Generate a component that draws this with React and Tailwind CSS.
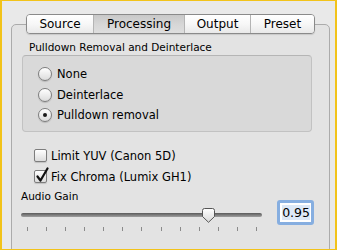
import React from 'react'

const tabs = [
  { label: 'Source', w: 'w-[66px]' },
  { label: 'Processing', w: 'w-[91px]', active: true },
  { label: 'Output', w: 'w-[66px]' },
  { label: 'Preset', w: 'w-[64px]' },
]

function Radio({ checked, label }) {
  return (
    <div className="flex items-center h-[20.5px] gap-[5px]">
      <span className="relative flex items-center justify-center size-[14px] rounded-full border border-[#7d7d7d] bg-gradient-to-b from-[#ffffff] to-[#dcdcdc] shadow-[0_1px_1px_rgba(0,0,0,0.15)]">
        {checked && <span className="size-[4px] rounded-full bg-[#1a1a1a]" />}
      </span>
      <span className="text-[11.5px] leading-[14px] text-black">{label}</span>
    </div>
  )
}

function Checkbox({ checked, label }) {
  return (
    <div className="flex items-center h-[21px] gap-[4px]">
      <span className="relative size-[13px] rounded-[2px] border border-[#7d7d7d] bg-gradient-to-b from-[#ffffff] to-[#dcdcdc] shadow-[0_1px_1px_rgba(0,0,0,0.15)]">
        {checked && (
          <svg viewBox="0 0 14 16" className="absolute left-[0px] top-[-4px] w-[14px] h-[16px]">
            <path d="M2.5 9.5 L5.5 13.5 L12.5 1.5" fill="none" stroke="#111" strokeWidth="2.2" strokeLinecap="round" strokeLinejoin="round" />
          </svg>
        )}
      </span>
      <span className="text-[11.5px] leading-[14px] text-black">{label}</span>
    </div>
  )
}

export default function App() {
  const ticks = Array.from({ length: 13 })
  return (
    <div
      className="w-[337px] h-[250px] overflow-hidden bg-[#e9e9e9] border-[#f2c31a] border-t border-b border-l-2 border-r-2"
      style={{ fontFamily: '"DejaVu Sans", Verdana, sans-serif' }}
    >
      {/* Tabs */}
      <div className="relative z-10 mt-[13px] pl-[24px] flex">
        <div className="flex h-[20px] rounded-[4px] border border-[#8a8a8a] overflow-hidden shadow-[0_1px_1px_rgba(0,0,0,0.12)]">
          {tabs.map((t, i) => (
            <div
              key={t.label}
              className={`${t.w} flex items-center justify-center text-[12px] text-black ${i > 0 ? 'border-l border-[#b4b4b4]' : ''} ${
                t.active
                  ? 'bg-gradient-to-b from-[#c8c8c8] via-[#d6d6d6] to-[#dedede]'
                  : 'bg-gradient-to-b from-[#ffffff] via-[#f7f7f7] to-[#e9e9e9]'
              }`}
            >
              {t.label}
            </div>
          ))}
        </div>
      </div>

      {/* Tab box */}
      <div className="ml-[9px] w-[319px] h-[300px] -mt-[10px] border border-[#ababab] rounded-[5px] bg-[#e3e3e3]">
        <div className="pt-[16px] pl-[17px] text-[10.5px] leading-[13px] text-black">
          Pulldown Removal and Deinterlace
        </div>

        <div className="mt-[1px] ml-[10px] w-[290px] h-[77px] rounded-[4px] border border-[#c2c2c2] border-t-[#b5b5b5] bg-[#d9d9d9] pt-[8px] pl-[15px] flex flex-col">
          <Radio label="None" />
          <Radio label="Deinterlace" />
          <Radio label="Pulldown removal" checked />
        </div>

        <div className="mt-[13px] pl-[22px] flex flex-col">
          <Checkbox label="Limit YUV (Canon 5D)" />
          <Checkbox label="Fix Chroma (Lumix GH1)" checked />
        </div>

        <div className="mt-[3px] flex">
          <div className="pl-[9px] flex flex-col">
            <div className="text-[10.5px] leading-[13px] text-black">Audio Gain</div>
            <div className="relative mt-[10px] w-[241px] h-[4px] rounded-full bg-gradient-to-b from-[#5a5a5a] to-[#a0a0a0]">
              <svg viewBox="0 0 13 15" className="absolute left-[181px] top-[-5px] w-[13px] h-[15px]">
                <defs>
                  <linearGradient id="kn" x1="0" y1="0" x2="0" y2="1">
                    <stop offset="0" stopColor="#ffffff" />
                    <stop offset="1" stopColor="#d8d8d8" />
                  </linearGradient>
                </defs>
                <path d="M2.5 0.5 H10.5 Q12.5 0.5 12.5 2.5 V8.5 L6.5 14.3 L0.5 8.5 V2.5 Q0.5 0.5 2.5 0.5 Z" fill="url(#kn)" stroke="#555" strokeWidth="1" />
              </svg>
            </div>
            <div className="mt-[10px] w-[241px] pl-[6px] pr-[5px] flex justify-between">
              {ticks.map((_, i) => (
                <span key={i} className="w-px h-[4px] bg-[#8a8a8a]" />
              ))}
            </div>
          </div>
          <div className="ml-[15px] mt-[10px] w-[37px] h-[25px] rounded-[3px] border-[3px] border-[#86aee0] bg-white flex items-center justify-end pr-[1px]">
            <span className="text-[12.5px] leading-[15px] text-black bg-[#dce8f7]">0.95</span>
          </div>
        </div>
      </div>
    </div>
  )
}
